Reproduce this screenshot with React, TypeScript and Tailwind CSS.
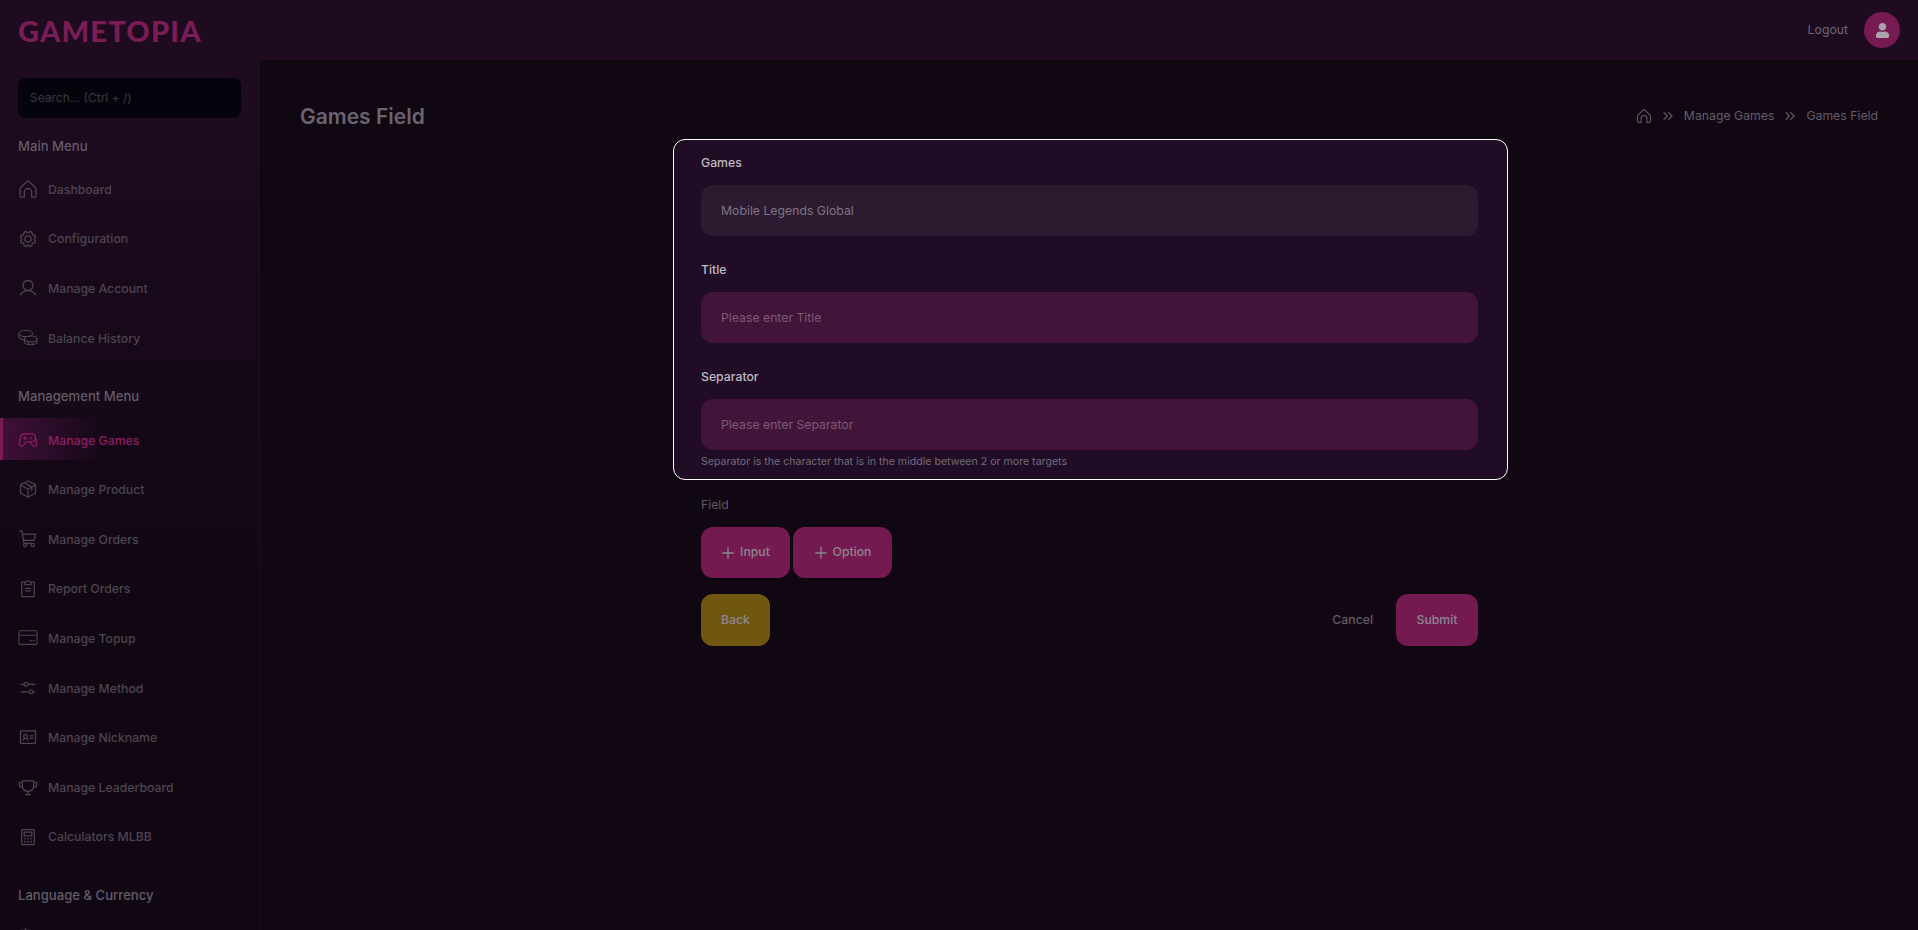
import { Plus, ChevronsRight } from "lucide-react";
import { FaUser } from "react-icons/fa";
import {
  PiGear,
  PiUser,
  PiGameController,
  PiPackage,
  PiShoppingCart,
  PiClipboardText,
  PiSlidersHorizontal,
  PiIdentificationCard,
  PiTrophy,
  PiCalculator,
  PiTranslate,
} from "react-icons/pi";

type IconProps = { className?: string };

const HomeIcon = ({ className }: IconProps) => (
  <svg viewBox="2 2 20 20" fill="none" stroke="currentColor" strokeWidth="1.3" strokeLinejoin="round" className={className}>
    <path d="M4.5 10.8 10.8 4.6a1.7 1.7 0 0 1 2.4 0l6.3 6.2a1.7 1.7 0 0 1 .5 1.2v6.3a1.9 1.9 0 0 1-1.9 1.9h-2.4v-5a3.7 3.7 0 0 0-7.4 0v5H5.9A1.9 1.9 0 0 1 4 18.3V12a1.7 1.7 0 0 1 .5-1.2Z" />
  </svg>
);

const CoinsIcon = ({ className }: IconProps) => (
  <svg viewBox="1 2 22 22" fill="none" stroke="currentColor" strokeWidth="1.2" strokeLinecap="round" className={className}>
    <ellipse cx="9.5" cy="8" rx="7.5" ry="3.5" />
    <path d="M2 8v3.5c0 1.7 2.5 3 6 3.4" />
    <ellipse cx="15" cy="14" rx="7" ry="3.2" />
    <path d="M8 14v3.2c0 1.8 3 3.2 7 3.2s7-1.4 7-3.2V14M12.5 17.6v2.3M16.5 17.8v2.3" />
  </svg>
);

const CardIcon = ({ className }: IconProps) => (
  <svg viewBox="1 2 22 22" fill="none" stroke="currentColor" strokeWidth="1.2" strokeLinecap="round" className={className}>
    <rect x="2" y="5" width="20" height="15" rx="1" />
    <path d="M2 10h20M13.5 16h2.5M17.5 16h1.5" />
  </svg>
);

type Item = { label: string; icon: React.ElementType; active?: boolean };

const mainMenu: Item[] = [
  { label: "Dashboard", icon: HomeIcon },
  { label: "Configuration", icon: PiGear },
  { label: "Manage Account", icon: PiUser },
  { label: "Balance History", icon: CoinsIcon },
];

const manageMenu: Item[] = [
  { label: "Manage Games", icon: PiGameController, active: true },
  { label: "Manage Product", icon: PiPackage },
  { label: "Manage Orders", icon: PiShoppingCart },
  { label: "Report Orders", icon: PiClipboardText },
  { label: "Manage Topup", icon: CardIcon },
  { label: "Manage Method", icon: PiSlidersHorizontal },
  { label: "Manage Nickname", icon: PiIdentificationCard },
  { label: "Manage Leaderboard", icon: PiTrophy },
  { label: "Calculators MLBB", icon: PiCalculator },
];

const MenuItem = ({ item }: { item: Item }) => {
  const Icon = item.icon;
  if (item.active) {
    return (
      <div className="h-[42px] -mt-[2px] mb-[9.6px] pt-[4px] flex items-center gap-[10px] pl-[15px] border-l-[3px] border-[#7a1a52] rounded-r-[3px] bg-gradient-to-r from-[#3f1038] to-transparent [background-size:100px_100%] bg-no-repeat text-[#8f1f63]">
        <Icon className="w-[20px] h-[20px] -translate-y-[1px]" />
        <span className="text-[12.25px] font-medium">{item.label}</span>
      </div>
    );
  }
  return (
    <div className="h-[42px] mb-[7.6px] flex items-center gap-[10px] pl-[18px] text-[#4d4450]">
      <Icon className="w-[20px] h-[20px] -translate-y-[1px]" />
      <span className="text-[12.25px] font-medium">{item.label}</span>
    </div>
  );
};

const Field = ({ label, placeholder, disabled }: { label: string; placeholder: string; disabled?: boolean }) => (
  <div>
    <div className="h-[20px] pt-[1px] text-[12.25px] leading-[20px] font-medium text-[#bfbac4]">{label}</div>
    <div
      className={`mt-[13px] h-[51px] rounded-[12px] px-[20px] pt-[1px] flex items-center text-[12.25px] ${
        disabled ? "bg-[#2c1b30] text-[#7d7584]" : "bg-[#431439] text-[#7c5a75]"
      }`}
    >
      {placeholder}
    </div>
  </div>
);

export default function App() {
  return (
    <div className="h-[930px] overflow-hidden flex flex-col bg-[#110713] font-['Inter',sans-serif]">
      <header className="h-[60px] shrink-0 bg-[#1e0b20] flex items-center justify-between pl-[18px] pr-[18px]">
        <div className="text-[29px] leading-none font-['Lato',sans-serif] font-black tracking-[1.2px] text-[#7a1c55]">
          GAMETOPIA
        </div>
        <div className="flex items-center gap-[16px]">
          <span className="text-[12.25px] text-[#6e6773]">Logout</span>
          <div className="w-[36px] h-[36px] rounded-full bg-[#771a52] flex items-center justify-center text-[#a9a4ab]">
            <FaUser className="text-[15px]" />
          </div>
        </div>
      </header>
      <div className="flex flex-1 min-h-0">
        <aside className="w-[260px] shrink-0 border-r border-[#1d0e20] bg-gradient-to-b from-[#1e0b20] to-[#110713] to-60% pt-[18px] overflow-hidden">
          <div className="mx-[18px] w-[223px] h-[40px] rounded-[8px] bg-[#05040d] flex items-center pl-[12px] text-[12px] text-[#3d3741]">
            Search... (Ctrl + /)
          </div>
          <div className="mt-[18px] mb-[13px] pl-[18px] text-[13.125px] leading-[20px] font-medium text-[#625b68]">Main Menu</div>
          {mainMenu.map((item) => (
            <MenuItem key={item.label} item={item} />
          ))}
          <div className="mt-[26px] mb-[14px] pl-[18px] text-[13.125px] leading-[20px] font-medium text-[#625b68]">Management Menu</div>
          {manageMenu.map((item) => (
            <MenuItem key={item.label} item={item} />
          ))}
          <div className="mt-[26px] mb-[21px] pl-[18px] text-[13.125px] leading-[20px] font-medium text-[#625b68]">Language &amp; Currency</div>
          <div className="pl-[18px] text-[#4d4450]">
            <PiTranslate className="text-[20px]" />
          </div>
        </aside>
        <main className="flex-1 min-w-0 pt-[43px] pl-[40px] pr-[40px]">
          <div className="flex items-center justify-between h-[26px]">
            <h1 className="pt-[2px] text-[21px] font-semibold text-[#6a6370]">Games Field</h1>
            <div className="flex items-center gap-[8px] text-[12.25px] text-[#635d6a]">
              <HomeIcon className="w-[16px] h-[16px]" />
              <ChevronsRight className="w-[16px] h-[16px]" strokeWidth={1.75} />
              <span>Manage Games</span>
              <ChevronsRight className="w-[16px] h-[16px]" strokeWidth={1.75} />
              <span>Games Field</span>
            </div>
          </div>
          <div className="w-[835px] ml-[373px] mt-[10px]">
            <div className="h-[341px] rounded-[12px] border border-white bg-[#200d25] pl-[27px] pr-[29px] pt-[12px] flex flex-col gap-[23px]">
              <Field label="Games" placeholder="Mobile Legends Global" disabled />
              <Field label="Title" placeholder="Please enter Title" />
              <div>
                <Field label="Separator" placeholder="Please enter Separator" />
                <div className="mt-[5px] text-[10.6px] leading-[14px] text-[#736a78]">
                  Separator is the character that is in the middle between 2 or more targets
                </div>
              </div>
            </div>
            <div className="pl-[28px] pr-[30px]">
              <div className="mt-[15px] h-[20px] text-[12.25px] leading-[20px] text-[#5f5966]">Field</div>
              <div className="mt-[12px] flex gap-[3px]">
                <button className="h-[51px] w-[89px] rounded-[12px] bg-[#751a50] flex items-center justify-center gap-[3px] pr-[2px] text-[12.25px] font-medium text-[#8c8590]">
                  <Plus className="w-[18px] h-[18px]" strokeWidth={1.75} />
                  Input
                </button>
                <button className="h-[51px] w-[99px] rounded-[12px] bg-[#751a50] flex items-center justify-center gap-[3px] pr-[2px] text-[12.25px] font-medium text-[#8c8590]">
                  <Plus className="w-[18px] h-[18px]" strokeWidth={1.75} />
                  Option
                </button>
              </div>
              <div className="mt-[16px] flex items-center">
                <button className="h-[52px] w-[69px] rounded-[12px] bg-[#70570f] text-[12.25px] font-medium text-[#8c8590]">Back</button>
                <button className="ml-auto h-[52px] px-[20px] text-[12.25px] font-medium text-[#625b68]">Cancel</button>
                <button className="ml-[3px] h-[52px] w-[82px] rounded-[12px] bg-[#751a50] text-[12.25px] font-medium text-[#8c8590]">Submit</button>
              </div>
            </div>
          </div>
        </main>
      </div>
    </div>
  );
}
